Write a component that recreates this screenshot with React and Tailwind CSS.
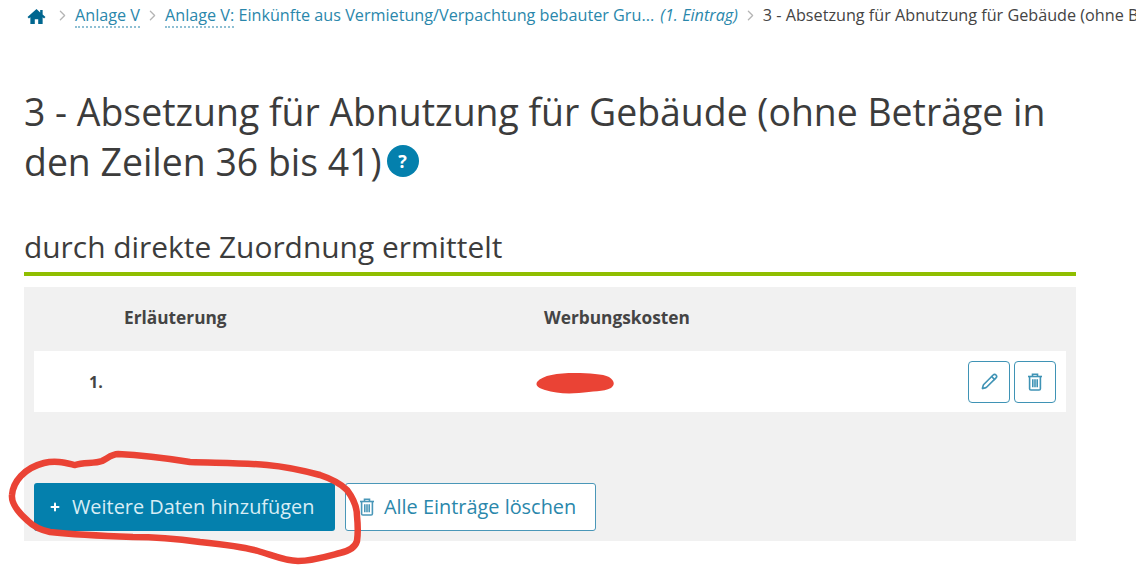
import { ChevronRight, Pencil, Plus } from "lucide-react";

function Crumb({ children }) {
  return (
    <a className="text-[#2a87ab] border-b-2 border-dotted border-[#8fc0d4]">{children}</a>
  );
}

function Sep() {
  return <ChevronRight className="w-[17px] h-[17px] mx-[4px] mt-[3px] text-[#b5b5b5] shrink-0" strokeWidth={1.8} />;
}

function TrashIcon({ className }) {
  return (
    <svg viewBox="0 0 16 18" fill="none" stroke="currentColor" strokeWidth="1.6" className={className}>
      <path d="M1 3.5h14" />
      <path d="M5.5 3V1.2h5V3" />
      <path d="M2.6 3.5v12.2c0 .8.5 1.3 1.3 1.3h8.2c.8 0 1.3-.5 1.3-1.3V3.5" />
      <path d="M5.8 6.2v8M8 6.2v8M10.2 6.2v8" />
    </svg>
  );
}

export default function App() {
  return (
    <div className="relative w-[1136px] h-[580px] overflow-hidden bg-white font-['Open_Sans',sans-serif] text-[#333]">
      {/* Breadcrumb */}
      <nav className="flex items-start h-[27px] pt-[4px] pl-[27px] text-[16.2px] leading-[22px] whitespace-nowrap">
        <svg viewBox="0 0 20 18" className="w-[19px] h-[17px] mt-[4px] mr-[4px] fill-[#00668f] shrink-0">
          <path d="M10 1 0.5 9.6 2 11 3.5 9.7V17h4.7v-5h3.6v5h4.7V9.7l1.5 1.3 1.5-1.4L16.5 7V2.2h-2.6v2.5z" />
        </svg>
        <Sep />
        <span>
          <Crumb>Anlage V</Crumb>
        </span>
        <Sep />
        <span className="text-[#2a87ab]">
          <Crumb>Anlage V:</Crumb> Einkünfte aus Vermietung/Verpachtung bebauter Gru... <i className="ml-[2px]">(1. Eintrag)</i>
        </span>
        <Sep />
        <span className="text-[#444]">3 - Absetzung für Abnutzung für Gebäude (ohne Beträge in den Zeilen 36 bis 41)</span>
      </nav>

      <main className="px-[24px]">
        <h1 className="mt-[60px] text-[37.4px] leading-[50px] font-normal text-[#3c3c3c] whitespace-nowrap">
          3 - Absetzung für Abnutzung für Gebäude (ohne Beträge in
          <br />
          den Zeilen 36 bis 41)
          <span className="inline-flex align-[8px] ml-[5px] w-[32px] h-[32px] rounded-full bg-[#0480ad] text-white text-[18px] leading-none font-bold items-center justify-center">?</span>
        </h1>

        <div className="w-[1052px]">
          <h2 className="mt-[42px] h-[43px] text-[29.9px] leading-[36px] font-normal text-[#3c3c3c] border-b-[4px] border-[#8fbe00] box-content">
            durch direkte Zuordnung ermittelt
          </h2>

          <section className="mt-[11px] h-[254px] bg-[#f1f1f1] px-[10px] pt-[21px]">
            <div className="flex h-[20px] text-[17.3px] leading-[20px] font-bold text-[#444]">
              <span className="ml-[90px] w-[420px]">Erläuterung</span>
              <span>Werbungskosten</span>
            </div>

            <div className="mt-[23px] h-[61px] bg-white flex items-center pl-[55px] pr-[10px]">
              <span className="font-bold text-[16px] text-[#444]">1.</span>
              <div className="ml-auto flex gap-[4px]">
                <button className="w-[42px] h-[42px] flex items-center justify-center rounded-[4px] border border-[#3f93b5] text-[#3f93b5] bg-white">
                  <Pencil className="w-[17px] h-[17px]" strokeWidth={2.3} />
                </button>
                <button className="w-[42px] h-[42px] flex items-center justify-center rounded-[4px] border border-[#3f93b5] text-[#3f93b5] bg-white">
                  <TrashIcon className="w-[16px] h-[20px]" />
                </button>
              </div>
            </div>

            <div className="mt-[71px] flex gap-[10px]">
              <button className="w-[301px] h-[48px] flex items-center pl-[15px] rounded-[3px] bg-[#0480ad] text-[#d8edf5] text-[19.9px]">
                <Plus className="w-[12px] h-[12px] mr-[11px] text-white" strokeWidth={4} />
                Weitere Daten hinzufügen
              </button>
              <button className="w-[251px] h-[48px] flex items-center pl-[13px] rounded-[3px] border border-[#4a97b8] bg-white text-[#2a87ab] text-[19.9px]">
                <TrashIcon className="w-[16px] h-[20px] mr-[9px] text-[#4a97b8]" />
                Alle Einträge löschen
              </button>
            </div>
          </section>
        </div>
      </main>

      {/* Red marker annotations on top of the screenshot */}
      <svg className="absolute left-0 top-0 w-[1136px] h-[580px] pointer-events-none" viewBox="0 0 1136 580" fill="none">
        <path
          d="M537 382c6-7 20-9 38-9 14 0 28 1 34 4 6 4 6 8 2 11-8 4-18 3-32 5-14 1-24 0-34-3-6-2-10-4-8-8z"
          fill="#ea4335"
        />
        <path
          d="M12 495C13 482 24 468 44 463C56 460 66 463 75 465C84 462 94 464 102 461C108 458 112 454 118 454C140 455 165 458 190 462C220 463 245 463 267 465C290 467 305 471 320 475C332 479 340 483 347 490C353 498 357 506 357 516C358 526 358 534 357 541C355 548 349 551 340 553C325 557 312 561 298 561C285 561 272 555 258 551C240 546 220 544 200 542C178 539 155 537 133 537C105 536 78 535 50 532C40 530 33 526 28 521C20 514 11 505 12 495Z"
          stroke="#ea4335"
          strokeWidth="6.5"
          strokeLinejoin="round"
        />
      </svg>
    </div>
  );
}
